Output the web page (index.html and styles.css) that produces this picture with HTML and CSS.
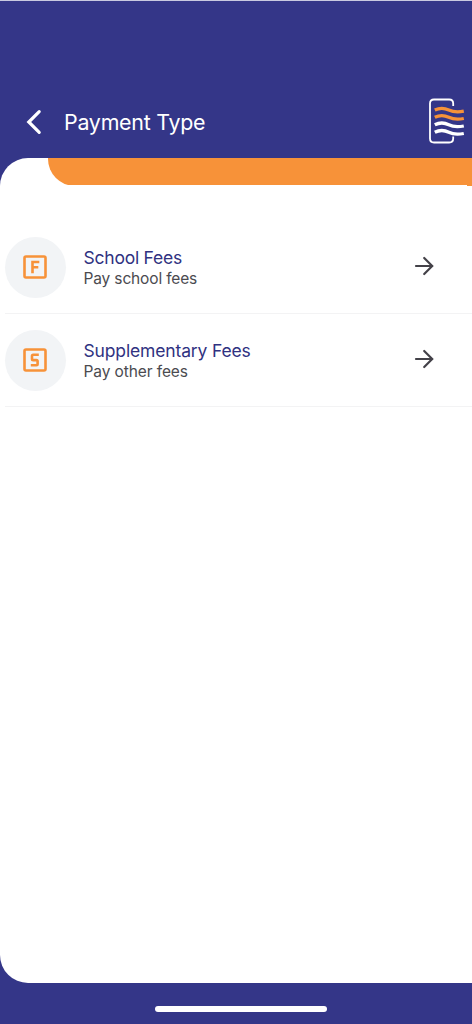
FILE: index.html
```html
<!DOCTYPE html>
<html lang="en">
<head>
<meta charset="utf-8">
<title>Payment Type</title>
<link rel="stylesheet" href="styles.css">
</head>
<body>
<div class="screen">
  <header class="header">
    <svg class="back" width="16" height="26" viewBox="0 0 16 26"><path d="M13.2 2.700 2.800 13l10.400 10.300"/></svg>
    <h1 class="title">Payment Type</h1>
    <svg class="logo" width="38" height="48" viewBox="0 0 38 48">
      <path class="phone" d="M25.200 8V5.500q0-4-4-4H6Q2 1.500 2 5.500v35q0 4 4 4h15.200q4 0 4-4V38.500"/>
      <path class="wave orange" d="M6.800 12c5-2.400 9-2.400 14 0s10 2.200 15 1.200"/>
      <path class="wave orange" d="M6.800 19.300c5-2.400 9-2.400 14 0s10 2.200 15 1.200"/>
      <path class="wave" d="M6.800 26.800c5-2.600 9-2.600 14 0s10 2.200 15 1.200"/>
      <path class="wave" d="M6.800 34.300c5-2.600 9-2.600 14 0s10 2.200 15 1.200"/>
    </svg>
  </header>
  <main class="sheet">
    <div class="band"></div>
    <ul class="list">
      <li class="item">
        <span class="avatar"><svg width="24" height="24" viewBox="0 0 24 24"><rect x="1.500" y="1.500" width="21" height="21" rx="1.500"/><path d="M9.500 18.300V7H16.300M9.500 12.300H15.300"/></svg></span>
        <span class="text"><span class="name school">School Fees</span><span class="note">Pay school fees</span></span>
        <svg class="arrow" width="20" height="20" viewBox="0 0 20 20"><path d="M2 10h16M10.200 2 18.200 10l-8 8"/></svg>
      </li>
      <li class="item">
        <span class="avatar"><svg width="24" height="24" viewBox="0 0 24 24"><rect x="1.500" y="1.500" width="21" height="21" rx="1.500"/><path d="M15.800 6.800H10.200Q9 6.800 9 8V10.900Q9 12.100 10.200 12.100H13.400Q14.600 12.100 14.600 13.300V16.100Q14.600 17.300 13.400 17.300H7.800"/></svg></span>
        <span class="text"><span class="name">Supplementary Fees</span><span class="note other">Pay other fees</span></span>
        <svg class="arrow" width="20" height="20" viewBox="0 0 20 20"><path d="M2 10h16M10.200 2 18.200 10l-8 8"/></svg>
      </li>
    </ul>
  </main>
  <footer class="footer"><div class="home-bar"></div></footer>
</div>
</body>
</html>
```
FILE: styles.css
```css
* { box-sizing: border-box; }
body { margin: 0; }
.screen {
  width: 472px;
  height: 1024px;
  display: flex;
  flex-direction: column;
  overflow: hidden;
  background: #343688;
  border-top: 1px solid #c9c9e0;
  font-family: Inter, "Liberation Sans", sans-serif;
}
.header {
  height: 157px;
  display: flex;
  align-items: center;
  padding: 84px 6px 0 26px;
}
.back { fill: none; stroke: #fff; stroke-width: 3.200; stroke-linecap: round; }
.title {
  flex: 1;
  margin: 0 0 0 22px;
  font-size: 21.400px;
  font-weight: 400;
  line-height: 28px;
  letter-spacing: -0.250px;
  color: #fff;
}
.logo { fill: none; stroke: #fff; }
.phone { stroke-width: 1.800; }
.wave { stroke-width: 3.300; }
.orange { stroke: #f79239; }
.sheet {
  height: 825px;
  background: #fff;
  border-radius: 28px 0 0 28px;
}
.band {
  height: 28px;
  margin-left: 48px;
  background:
    linear-gradient(#f79239, #f79239) top / 100% 27px no-repeat,
    linear-gradient(#f79239, #f79239) right bottom / 5px 1px no-repeat;
  border-bottom-left-radius: 27px;
}
.list { list-style: none; margin: 0; padding: 35px 0 0 5px; }
.item {
  height: 93px;
  display: flex;
  align-items: center;
  padding-right: 38px;
  border-bottom: 1px solid #f3f3f4;
}
.avatar {
  width: 61px;
  height: 61px;
  display: flex;
  align-items: center;
  justify-content: center;
  padding-right: 1px;
  border-radius: 50%;
  background: #f2f4f6;
}
.avatar svg { fill: none; stroke: #f79239; stroke-width: 2.600; }
.text { flex: 1; display: flex; flex-direction: column; padding-left: 17.500px; }
.name { font-size: 17.500px; line-height: 21px; letter-spacing: -0.150px; color: #303281; }
.school { letter-spacing: -0.230px; }
.note { padding-top: 1px; margin-bottom: -1px; font-size: 15.500px; line-height: 20px; letter-spacing: -0.150px; color: #4b4b50; }
.other { letter-spacing: -0.100px; }
.arrow { margin-bottom: 2px; fill: none; stroke: #434148; stroke-width: 2.200; stroke-linecap: round; }
.footer { flex: 1; display: flex; justify-content: center; padding: 23px 0 0 9px; }
.home-bar { width: 172px; height: 6px; border-radius: 3px; background: #fff; }
```
